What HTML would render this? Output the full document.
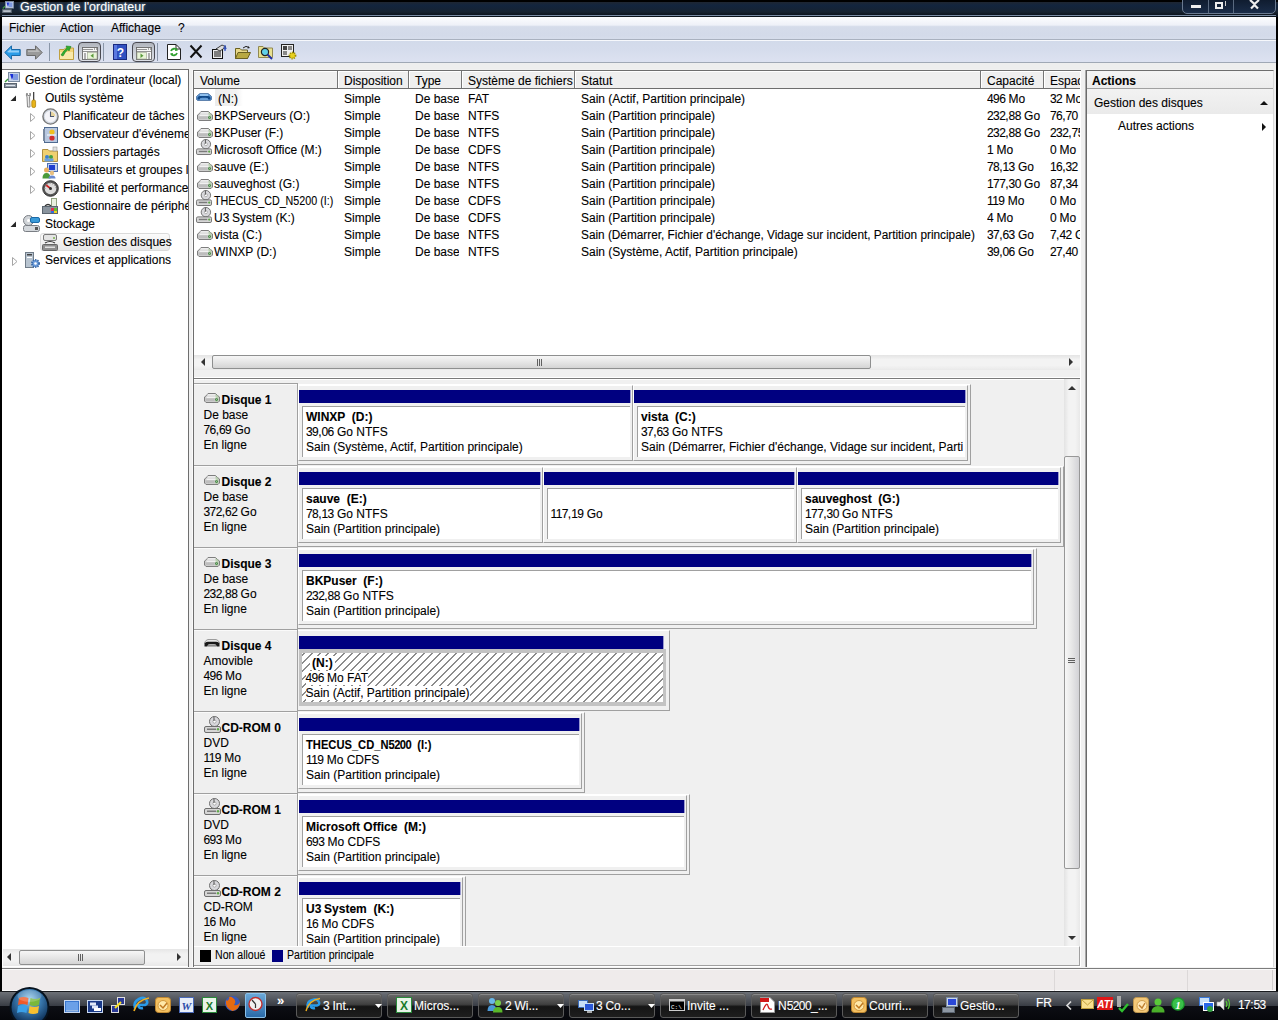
<!DOCTYPE html><html><head><meta charset="utf-8"><style>
*{margin:0;padding:0;box-sizing:border-box}
html,body{width:1278px;height:1020px;overflow:hidden;background:#000;font-family:"Liberation Sans",sans-serif;font-size:12px;color:#000}
.t{-webkit-text-stroke:0.1px currentColor}
.ab{position:absolute}
.t{position:absolute;white-space:pre;line-height:14px}
.ic{position:absolute;overflow:visible}
.clip{position:absolute;overflow:hidden}
.d{letter-spacing:-0.6px}
</style></head><body>
<div class="ab" style="left:2px;top:17px;width:1274px;height:974px;background:#f0f0f0"></div>
<div class="ab" style="left:0px;top:0px;width:1278px;height:17px;background:linear-gradient(#000 0,#000 9%,#1e2632 13%,#13253e 30%,#14243a 45%,#172330 70%,#0e1620 86%)"></div>
<div class="ab" style="left:2px;top:15px;width:1274px;height:1px;background:#7a8ca4"></div>
<div class="ab" style="left:2px;top:16px;width:1274px;height:1px;background:#0a121a"></div>
<svg class="ic" style="left:2px;top:1px;" width="12" height="12" viewBox="0 0 16 16"><rect x="4.5" y="0.5" width="11" height="9" fill="#c8d4e8" stroke="#7a8aa0"/><path d="M6 2 L10 2 L8 8 Z" fill="#1a2fd8"/><rect x="9" y="2" width="5" height="6" fill="#7f9ae0"/><rect x="0.5" y="11.5" width="12" height="4" fill="#8e98a4" stroke="#5a6470"/><rect x="2" y="13" width="9" height="1" fill="#e0e6ee"/><path d="M1 10 L4 7" stroke="#3a9a3a" stroke-width="1.5"/></svg>
<div class="t" style="left:20px;top:-1px;color:#fff;font-size:12.5px;line-height:16px;text-shadow:0 0 3px #8ab">Gestion de l'ordinateur</div>
<div class="ab" style="left:1182px;top:-3px;width:94px;height:17px;border:1px solid #6a7a90;border-radius:0 0 5px 5px;background:linear-gradient(#0e1a2c,#1a2c48)"></div>
<div class="ab" style="left:1208px;top:0px;width:1px;height:13px;background:#5a6a80"></div>
<div class="ab" style="left:1233px;top:0px;width:1px;height:13px;background:#5a6a80"></div>
<div class="ab" style="left:1191px;top:5px;width:10px;height:3px;background:#eee"></div>
<div class="ab" style="left:1215px;top:2px;width:8px;height:7px;border:2px solid #eee"></div>
<div class="ab" style="left:1225px;top:1px;width:1px;height:5px;background:#ccc"></div>
<svg class="ic" style="left:1249px;top:0px;" width="11" height="9" viewBox="0 0 11 9"><path d="M1 0 L5.5 4 L10 0 M2 8.5 L5.5 5 L9 8.5" stroke="#eee" stroke-width="2.2" fill="none"/></svg>
<div class="ab" style="left:2px;top:17px;width:1274px;height:23px;background:linear-gradient(#fcfdfe,#eef1f8 35%,#d5dcea 42%,#d3dae9 80%,#d7deec)"></div>
<div class="ab" style="left:2px;top:39px;width:1274px;height:1px;background:#a9b1bf"></div>
<div class="t" style="left:9px;top:21px;">Fichier</div>
<div class="t" style="left:60px;top:21px;">Action</div>
<div class="t" style="left:111px;top:21px;">Affichage</div>
<div class="t" style="left:178px;top:21px;">?</div>
<div class="ab" style="left:2px;top:40px;width:1274px;height:23px;background:linear-gradient(#d2daea,#d5dcec 40%,#dde2f1)"></div>
<div class="ab" style="left:2px;top:40px;width:1274px;height:1px;background:#f6f8fc"></div>
<div class="ab" style="left:2px;top:62px;width:1274px;height:1px;background:#a0a8b5"></div>
<div class="ab" style="left:2px;top:63px;width:1274px;height:6px;background:#eeeeee"></div>
<svg class="ic" style="left:4px;top:45px;" width="17" height="15" viewBox="0 0 17 15"><path d="M0.8 7.5 L7.5 0.8 V4.5 H16.2 V10.5 H7.5 V14.2 Z" fill="#2a9ce8" stroke="#1a6aa8" stroke-linejoin="round"/><path d="M3 7 L7 3.5 V5.5 H15 V7.5 H5Z" fill="#bfe6ff" opacity="0.7"/></svg>
<svg class="ic" style="left:26px;top:45px;" width="17" height="15" viewBox="0 0 17 15"><path d="M16.2 7.5 L9.5 0.8 V4.5 H0.8 V10.5 H9.5 V14.2 Z" fill="#9a9a9a" stroke="#6a6a6a" stroke-linejoin="round"/><path d="M2 5.5 H10 V3 L14 7 H2Z" fill="#d0d0d0" opacity="0.6"/></svg>
<div class="ab" style="left:49px;top:43px;width:1px;height:18px;background:#8a96a8"></div>
<svg class="ic" style="left:59px;top:45px;" width="15" height="15" viewBox="0 0 15 15"><path d="M0.5 4.5 H5 L6.5 3 H14.5 V14.5 H0.5Z" fill="#f4d478" stroke="#c0a040"/><rect x="1" y="7" width="13" height="7" fill="#fae8a8"/><path d="M2 10 Q5 5 8 3 L7 1 L12 1.5 L10 6 L9 4.5 Q6 7 4 11Z" fill="#30b030" stroke="#208020" stroke-width="0.6"/></svg>
<div class="ab" style="left:78px;top:42px;width:23px;height:20px;border:1.5px solid #4a4a52;border-radius:4px;background:linear-gradient(#b0b4bc,#c8ccd4 40%,#dde0e7)"></div>
<svg class="ic" style="left:82px;top:47px;" width="16" height="13" viewBox="0 0 16 13"><rect x="0.5" y="0.5" width="15" height="12" fill="#f8f8f8" stroke="#6a6a6a" stroke-width="0.9"/><path d="M1 2.5 H11 M1 4.5 H15" stroke="#7a7a7a" stroke-width="0.8"/><rect x="12" y="1.5" width="1" height="1" fill="#555"/><rect x="14" y="1.5" width="1" height="1" fill="#555"/><rect x="5.5" y="5.5" width="9.5" height="6.5" fill="#e8f4d8" stroke="#9aa08a" stroke-width="0.6"/><path d="M11.5 6.5 L8.5 8.8 L11.5 11Z" fill="#5a9a3a"/><path d="M2 7 H4 M2 9 H4 M2 11 H4" stroke="#555" stroke-width="0.9"/></svg>
<div class="ab" style="left:103px;top:43px;width:1px;height:18px;background:#8a96a8"></div>
<svg class="ic" style="left:113px;top:44px;" width="14" height="16" viewBox="0 0 14 16"><rect x="0.5" y="0.5" width="13" height="15" fill="#3050c0" stroke="#1a2a80"/><rect x="1" y="1" width="3" height="14" fill="#5a78e0"/><text x="7.5" y="12.5" font-family="Liberation Sans" font-size="12" font-weight="bold" fill="#fff" text-anchor="middle">?</text></svg>
<div class="ab" style="left:132px;top:42px;width:23px;height:20px;border:1.5px solid #4a4a52;border-radius:4px;background:linear-gradient(#b0b4bc,#c8ccd4 40%,#dde0e7)"></div>
<svg class="ic" style="left:136px;top:47px;" width="16" height="13" viewBox="0 0 16 13"><rect x="0.5" y="0.5" width="15" height="12" fill="#f8f8f8" stroke="#6a6a6a" stroke-width="0.9"/><path d="M1 2.5 H11 M1 4.5 H15" stroke="#7a7a7a" stroke-width="0.8"/><rect x="12" y="1.5" width="1" height="1" fill="#555"/><rect x="14" y="1.5" width="1" height="1" fill="#555"/><rect x="1" y="5.5" width="9.5" height="6.5" fill="#e8f4d8" stroke="#9aa08a" stroke-width="0.6"/><path d="M4.5 6.5 L7.5 8.8 L4.5 11Z" fill="#5a9a3a"/><path d="M12 7 H14 M12 9 H14 M12 11 H14" stroke="#555" stroke-width="0.9"/></svg>
<div class="ab" style="left:157px;top:43px;width:1px;height:18px;background:#8a96a8"></div>
<svg class="ic" style="left:167px;top:44px;" width="14" height="16" viewBox="0 0 14 16"><path d="M0.5 0.5 H9 L13.5 5 V15.5 H0.5Z" fill="#fff" stroke="#222"/><path d="M9 0.5 V5 H13.5" fill="none" stroke="#222"/><path d="M4 7 A3.5 3.5 0 0 1 10 6" fill="none" stroke="#30a030" stroke-width="1.8"/><path d="M10 9 A3.5 3.5 0 0 1 4 10" fill="none" stroke="#30a030" stroke-width="1.8"/><path d="M8.5 4 L11 6.5 L8 7Z" fill="#30a030"/><path d="M5.5 12 L3 9.5 L6 9Z" fill="#30a030"/></svg>
<svg class="ic" style="left:189px;top:44px;" width="14" height="15" viewBox="0 0 14 15"><path d="M1.5 1.5 L12.5 13.5 M12.5 1.5 L1.5 13.5" stroke="#111" stroke-width="2"/></svg>
<svg class="ic" style="left:212px;top:44px;" width="16" height="15" viewBox="0 0 16 15"><rect x="0.5" y="5.5" width="10" height="9" fill="#eee" stroke="#111"/><path d="M2 8 H9 M2 10 H9 M2 12 H9" stroke="#111" stroke-width="1"/><path d="M4 5 L10 1 L14 3 L8 7Z" fill="#ddd" stroke="#111" stroke-width="0.8"/><path d="M13 1 V7" stroke="#3050c0" stroke-width="1.2"/><path d="M11 3 L15 4 L13 6Z" fill="#3050c0"/></svg>
<svg class="ic" style="left:235px;top:45px;" width="16" height="14" viewBox="0 0 16 14"><path d="M0.5 3.5 H5 L6.5 5 H12.5 V13.5 H0.5Z" fill="#e8d888" stroke="#6a6020"/><path d="M0.5 13.5 L3 7.5 H15.5 L12.5 13.5Z" fill="#b8a840" stroke="#6a6020"/><path d="M8 3 Q11 0 14 2.5" fill="none" stroke="#222" stroke-width="1"/><path d="M13 1 L15 3 L12.5 3.5Z" fill="#222"/></svg>
<svg class="ic" style="left:258px;top:44px;" width="16" height="16" viewBox="0 0 16 16"><path d="M0.5 2.5 H5 L6.5 4 H14.5 V13.5 H0.5Z" fill="#e8e090" stroke="#908850"/><circle cx="7" cy="8" r="3.6" fill="#60d0e8" stroke="#222" stroke-width="1.2"/><path d="M9.5 10.5 L14 15" stroke="#2030a0" stroke-width="2"/></svg>
<svg class="ic" style="left:281px;top:44px;" width="16" height="16" viewBox="0 0 16 16"><rect x="0.5" y="0.5" width="12" height="12" fill="#eee" stroke="#222"/><rect x="2" y="2" width="4" height="4" fill="#444"/><rect x="7" y="2" width="4" height="4" fill="#888"/><rect x="2" y="7" width="4" height="4" fill="#888"/><circle cx="11.5" cy="11.5" r="3" fill="#e8d020" stroke="#a09000" stroke-width="1.8" stroke-dasharray="1.2 1"/></svg>
<div class="ab" style="left:2px;top:69px;width:187px;height:899px;background:#fff;border-right:1px solid #6e6e6e;border-top:1px solid #6e6e6e;border-bottom:1px solid #6e6e6e"></div>
<div class="clip" style="left:2px;top:70px;width:186px;height:879px">
<svg class="ic" style="left:2px;top:2px;" width="16" height="16" viewBox="0 0 16 16"><rect x="4.5" y="0.5" width="11" height="9" fill="#c8d4e8" stroke="#7a8aa0"/><path d="M6 2 L10 2 L8 8 Z" fill="#1a2fd8"/><rect x="9" y="2" width="5" height="6" fill="#7f9ae0"/><rect x="0.5" y="11.5" width="12" height="4" fill="#8e98a4" stroke="#5a6470"/><rect x="2" y="13" width="9" height="1" fill="#e0e6ee"/><path d="M1 10 L4 7" stroke="#3a9a3a" stroke-width="1.5"/></svg>
<div class="t" style="left:23px;top:2.5px;">Gestion de l'ordinateur (local)</div>
<svg class="ic" style="left:8px;top:25.0px;" width="7" height="7" viewBox="0 0 7 7"><path d="M6 0.5 V6 H0.5 Z" fill="#262626"/></svg>
<svg class="ic" style="left:23px;top:22px;" width="12" height="16" viewBox="0 0 12 16"><path d="M2 1 Q0.5 3 2 5 L2.5 15 H5 L4.5 5 Q6.5 3 5 1 L4.8 3.5 H2.7 Z" fill="#e8e8e8" stroke="#7c7c7c" stroke-width="0.9"/><rect x="8" y="0" width="1.3" height="8" fill="#444"/><rect x="6.8" y="8" width="3.8" height="7.5" rx="1.5" fill="#e8b41a" stroke="#a87a00" stroke-width="0.7"/></svg>
<div class="t" style="left:43px;top:20.5px;">Outils système</div>
<svg class="ic" style="left:28px;top:42.5px;" width="6" height="9" viewBox="0 0 6 9"><path d="M0.5 0.5 L5 4.5 L0.5 8.5 Z" fill="#fff" stroke="#a6a6a6"/></svg>
<svg class="ic" style="left:40px;top:38px;" width="17" height="17" viewBox="0 0 17 17"><circle cx="8.5" cy="8.5" r="7.6" fill="#cfd6df" stroke="#777" stroke-width="1.4"/><circle cx="8.5" cy="8.5" r="5.8" fill="#f4f4f8"/><path d="M8.5 8.5 V3.5 A5 5 0 0 1 13.5 8.5Z" fill="#e8d6a0"/><path d="M8.5 3.5 V8.5 H12" stroke="#4c5870" stroke-width="1.1" fill="none"/></svg>
<div class="t" style="left:61px;top:38.5px;">Planificateur de tâches</div>
<svg class="ic" style="left:28px;top:60.5px;" width="6" height="9" viewBox="0 0 6 9"><path d="M0.5 0.5 L5 4.5 L0.5 8.5 Z" fill="#fff" stroke="#a6a6a6"/></svg>
<svg class="ic" style="left:41px;top:57px;" width="15" height="16" viewBox="0 0 15 16"><rect x="1.5" y="0.5" width="13" height="15" fill="#b8c8e0" stroke="#4e6a90"/><rect x="0" y="2" width="2" height="12" fill="#7a8aa0"/><circle cx="9" cy="5" r="2.6" fill="#f0c020"/><circle cx="9" cy="11" r="2.6" fill="#d03030"/><path d="M4 8 H13" stroke="#fff" stroke-width="1"/></svg>
<div class="t" style="left:61px;top:56.5px;">Observateur d'événements</div>
<svg class="ic" style="left:28px;top:78.5px;" width="6" height="9" viewBox="0 0 6 9"><path d="M0.5 0.5 L5 4.5 L0.5 8.5 Z" fill="#fff" stroke="#a6a6a6"/></svg>
<svg class="ic" style="left:40px;top:76px;" width="16" height="16" viewBox="0 0 16 16"><path d="M0.5 3.5 H6 L7.5 5 H15.5 V15.5 H0.5 Z" fill="#f0d070" stroke="#b09040"/><rect x="11" y="1" width="4" height="4" fill="#e0e0e0" stroke="#999" stroke-width="0.6"/><circle cx="5" cy="11" r="2" fill="#3a80d0"/><circle cx="9" cy="11" r="2" fill="#40a040"/><rect x="2.5" y="12.5" width="9" height="3" fill="#6aa0e0"/></svg>
<div class="t" style="left:61px;top:74.5px;">Dossiers partagés</div>
<svg class="ic" style="left:28px;top:96.5px;" width="6" height="9" viewBox="0 0 6 9"><path d="M0.5 0.5 L5 4.5 L0.5 8.5 Z" fill="#fff" stroke="#a6a6a6"/></svg>
<svg class="ic" style="left:40px;top:93px;" width="16" height="16" viewBox="0 0 16 16"><rect x="5.5" y="0.5" width="10" height="8" fill="#c0d0f0" stroke="#5070b0"/><rect x="7" y="2" width="6" height="5" fill="#2040d0"/><circle cx="4.5" cy="7" r="2.5" fill="#e8b060"/><path d="M0.5 15.5 Q0.5 10 4.5 10 Q8.5 10 8.5 15.5 Z" fill="#4a9a3a"/><circle cx="10" cy="10" r="2.2" fill="#e8c080"/><path d="M6.5 15.5 Q6.5 12.5 10 12.5 Q13.5 12.5 13.5 15.5 Z" fill="#6a8ad0"/></svg>
<div class="t" style="left:61px;top:92.5px;">Utilisateurs et groupes locaux</div>
<svg class="ic" style="left:28px;top:114.5px;" width="6" height="9" viewBox="0 0 6 9"><path d="M0.5 0.5 L5 4.5 L0.5 8.5 Z" fill="#fff" stroke="#a6a6a6"/></svg>
<svg class="ic" style="left:40px;top:110px;" width="17" height="17" viewBox="0 0 17 17"><circle cx="8.5" cy="8.5" r="7.8" fill="#555" stroke="#333"/><circle cx="8.5" cy="8.5" r="5.8" fill="#ddd"/><path d="M8.5 8.5 L4 5" stroke="#d02020" stroke-width="1.6"/><circle cx="8.5" cy="8.5" r="1.5" fill="#333"/><path d="M3 9 A5.5 5.5 0 0 1 14 9" fill="none" stroke="#888" stroke-width="1" stroke-dasharray="1 1.5"/></svg>
<div class="t" style="left:61px;top:110.5px;">Fiabilité et performances</div>
<svg class="ic" style="left:40px;top:128px;" width="16" height="16" viewBox="0 0 16 16"><rect x="9.5" y="0.5" width="5" height="9" fill="#e8f0e0" stroke="#90a080"/><path d="M3 8 Q6 5 9 8" stroke="#333" fill="none" stroke-width="1.3"/><rect x="0.5" y="8.5" width="15" height="7" fill="#8a949e" stroke="#5a646e"/><rect x="9" y="10" width="3" height="3" fill="#e03050"/><rect x="12" y="10" width="3" height="3" fill="#60c030"/><rect x="12" y="13" width="3" height="2" fill="#f0d020"/><rect x="9" y="13" width="3" height="2" fill="#3070e0"/></svg>
<div class="t" style="left:61px;top:128.5px;">Gestionnaire de périphériques</div>
<svg class="ic" style="left:8px;top:151.0px;" width="7" height="7" viewBox="0 0 7 7"><path d="M6 0.5 V6 H0.5 Z" fill="#262626"/></svg>
<svg class="ic" style="left:21px;top:145px;" width="17" height="17" viewBox="0 0 17 17"><circle cx="5.5" cy="5.5" r="5" fill="#d0d4d8" stroke="#7a7e84"/><circle cx="5.5" cy="5.5" r="1.5" fill="#fff"/><rect x="7.5" y="2.5" width="9" height="5" rx="1.5" fill="#3a9ad8" stroke="#1a6aa8"/><rect x="0.5" y="10.5" width="16" height="6" rx="2" fill="#d4d8dc" stroke="#7a7e84"/><rect x="12" y="12" width="3" height="3" fill="#555"/></svg>
<div class="t" style="left:43px;top:146.5px;">Stockage</div>
<div class="ab" style="left:38px;top:163px;width:130px;height:18px;background:linear-gradient(#fbfbfb,#e8e8e8);border:1px solid #dadada;border-radius:3px"></div>
<svg class="ic" style="left:40px;top:164px;" width="16" height="17" viewBox="0 0 16 17"><rect x="1.5" y="0.5" width="13" height="6" rx="1.5" fill="#e4e4e4" stroke="#7a7a7a"/><circle cx="12" cy="4" r="1" fill="#7ab050"/><path d="M3 9 Q8 6 13 9" stroke="#333" fill="none" stroke-width="1.2"/><rect x="0.5" y="10.5" width="15" height="6" rx="1" fill="#8e8e8e" stroke="#666"/><rect x="3" y="12.5" width="10" height="1.5" fill="#e0e0e0"/></svg>
<div class="t" style="left:61px;top:164.5px;">Gestion des disques</div>
<svg class="ic" style="left:10px;top:186.5px;" width="6" height="9" viewBox="0 0 6 9"><path d="M0.5 0.5 L5 4.5 L0.5 8.5 Z" fill="#fff" stroke="#a6a6a6"/></svg>
<svg class="ic" style="left:23px;top:182px;" width="15" height="16" viewBox="0 0 15 16"><rect x="0.5" y="0.5" width="8" height="15" fill="#b8c4d0" stroke="#707c88"/><rect x="2" y="2" width="5" height="1.5" fill="#444"/><rect x="2" y="5" width="5" height="1" fill="#fff"/><circle cx="10.5" cy="11.5" r="3.6" fill="#6a9ad8" stroke="#3a6aa8" stroke-width="1.8" stroke-dasharray="1.3 1"/><circle cx="10.5" cy="11.5" r="1.3" fill="#fff"/></svg>
<div class="t" style="left:43px;top:182.5px;">Services et applications</div>
</div>
<div class="ab" style="left:3px;top:949px;width:185px;height:17px;background:linear-gradient(#e6e6e6,#f2f2f2 30%,#f2f2f2 70%,#e8e8e8)"></div>
<div class="ab" style="left:19px;top:950px;width:126px;height:15px;background:linear-gradient(#f6f6f6,#e6e6e6 50%,#d4d4d4);border:1px solid #8e8f8f;border-radius:2px"></div>
<svg class="ic" style="left:78px;top:954px;" width="7" height="7" viewBox="0 0 7 7"><path d="M0.5 0V7M2.5 0V7M4.5 0V7" stroke="#606060" stroke-width="1"/></svg>
<svg class="ic" style="left:7px;top:953px;" width="4" height="8" viewBox="0 0 4 8"><path d="M4 0 L0 4 L4 8Z" fill="#333"/></svg>
<svg class="ic" style="left:177px;top:953px;" width="4" height="8" viewBox="0 0 4 8"><path d="M0 0 L4 4 L0 8Z" fill="#333"/></svg>
<div class="ab" style="left:193px;top:70px;width:888px;height:897px;background:#fff;border-left:1px solid #6e6e6e;border-top:1px solid #6e6e6e"></div>
<div class="ab" style="left:192px;top:70px;width:1px;height:897px;background:#fafafa"></div>
<div class="ab" style="left:194px;top:71px;width:886px;height:18px;background:#efefef"></div>
<div class="ab" style="left:194px;top:71px;width:886px;height:1px;background:#fff"></div>
<div class="ab" style="left:194px;top:88px;width:886px;height:1px;background:#6e6e6e"></div>
<div class="clip" style="left:194px;top:71px;width:886px;height:17px">
<div class="t" style="left:6px;top:2.5px;">Volume</div>
<div class="t" style="left:150px;top:2.5px;">Disposition</div>
<div class="t" style="left:221px;top:2.5px;">Type</div>
<div class="t" style="left:274px;top:2.5px;">Système de fichiers</div>
<div class="t" style="left:387px;top:2.5px;">Statut</div>
<div class="t" style="left:793px;top:2.5px;">Capacité</div>
<div class="t" style="left:856px;top:2.5px;">Espace libre</div>
</div>
<div class="ab" style="left:337px;top:71px;width:1px;height:17px;background:#767676"></div>
<div class="ab" style="left:338px;top:72px;width:1px;height:16px;background:#fff"></div>
<div class="ab" style="left:408px;top:71px;width:1px;height:17px;background:#767676"></div>
<div class="ab" style="left:409px;top:72px;width:1px;height:16px;background:#fff"></div>
<div class="ab" style="left:461px;top:71px;width:1px;height:17px;background:#767676"></div>
<div class="ab" style="left:462px;top:72px;width:1px;height:16px;background:#fff"></div>
<div class="ab" style="left:574px;top:71px;width:1px;height:17px;background:#767676"></div>
<div class="ab" style="left:575px;top:72px;width:1px;height:16px;background:#fff"></div>
<div class="ab" style="left:980px;top:71px;width:1px;height:17px;background:#767676"></div>
<div class="ab" style="left:981px;top:72px;width:1px;height:16px;background:#fff"></div>
<div class="ab" style="left:1043px;top:71px;width:1px;height:17px;background:#767676"></div>
<div class="ab" style="left:1044px;top:72px;width:1px;height:16px;background:#fff"></div>
<div class="clip" style="left:194px;top:89px;width:886px;height:265px">
<div class="ab" style="left:21px;top:0px;width:28px;height:17px;background:linear-gradient(90deg,#ececec,#f2f2f2 75%,#fff)"></div>
<svg class="ic" style="left:2px;top:3.5999999999999943px;" width="16" height="8" viewBox="0 0 16 8"><path d="M4 0.5 H12 L13.5 1.5 L15.5 3.5 V6.5 L14.5 7.5 H1.5 L0.5 6.5 V3.5 L2.5 1.5 Z" fill="#5d95d0" stroke="#4a70a0" stroke-width="0.8"/><rect x="4" y="1.2" width="8" height="1.6" fill="#9ccaf4"/><path d="M1.5 5.5 Q1.5 3 4 3 H12 Q14.5 3 14.5 5.5 V6.5 H12.5 Q12 4.8 10 4.8 H6 Q4 4.8 3.5 6.5 H1.5Z" fill="#104888"/><rect x="4" y="5.5" width="8" height="1.5" fill="#6aa0d8"/></svg>
<div class="t" style="left:24px;top:2.5999999999999943px;">(N:)</div>
<div class="clip" style="left:150px;top:2.5999999999999943px;width:62px;height:14px"><div class="t" style="left:0;top:0">Simple</div></div>
<div class="clip" style="left:221px;top:2.5999999999999943px;width:44px;height:14px"><div class="t" style="left:0;top:0">De base</div></div>
<div class="clip" style="left:274px;top:2.5999999999999943px;width:104px;height:14px"><div class="t" style="left:0;top:0">FAT</div></div>
<div class="clip" style="left:387px;top:2.5999999999999943px;width:398px;height:14px"><div class="t" style="left:0;top:0">Sain (Actif, Partition principale)</div></div>
<div class="clip" style="left:793px;top:2.5999999999999943px;width:55px;height:14px"><div class="t" style="left:0;top:0"><span class="d">496</span> Mo</div></div>
<div class="clip" style="left:856px;top:2.5999999999999943px;width:30px;height:14px"><div class="t" style="left:0;top:0"><span class="d">32</span> Mo</div></div>
<svg class="ic" style="left:3px;top:21.599999999999994px;" width="16" height="10" viewBox="0 0 16 10"><path d="M4 0.5 H11.5 L13.5 2.5 L15.5 4 V8 L14 9.5 H2 L0.5 8 V4 L2.5 2.5 Z" fill="#cdcdcd" stroke="#7e7e7e"/><rect x="3.5" y="1.3" width="8" height="1.2" fill="#fafafa"/><rect x="2.5" y="3.6" width="10" height="1.2" fill="#fafafa"/><rect x="1.5" y="5.5" width="9" height="2.5" fill="#bdbdbd"/><path d="M11.5 1 L13.5 2.5 L14.5 4 V8 L13 9 H11.5Z" fill="#a8d098" opacity="0.55"/><circle cx="12.5" cy="6.6" r="1.4" fill="#3f7f3f"/><circle cx="12.5" cy="6.6" r="0.6" fill="#9fd09f"/></svg>
<div class="t" style="left:20px;top:19.599999999999994px;">BKPServeurs (O:)</div>
<div class="clip" style="left:150px;top:19.599999999999994px;width:62px;height:14px"><div class="t" style="left:0;top:0">Simple</div></div>
<div class="clip" style="left:221px;top:19.599999999999994px;width:44px;height:14px"><div class="t" style="left:0;top:0">De base</div></div>
<div class="clip" style="left:274px;top:19.599999999999994px;width:104px;height:14px"><div class="t" style="left:0;top:0">NTFS</div></div>
<div class="clip" style="left:387px;top:19.599999999999994px;width:398px;height:14px"><div class="t" style="left:0;top:0">Sain (Partition principale)</div></div>
<div class="clip" style="left:793px;top:19.599999999999994px;width:55px;height:14px"><div class="t" style="left:0;top:0"><span class="d">232</span>,<span class="d">88</span> Go</div></div>
<div class="clip" style="left:856px;top:19.599999999999994px;width:30px;height:14px"><div class="t" style="left:0;top:0"><span class="d">76</span>,<span class="d">70</span> Go</div></div>
<svg class="ic" style="left:3px;top:38.599999999999994px;" width="16" height="10" viewBox="0 0 16 10"><path d="M4 0.5 H11.5 L13.5 2.5 L15.5 4 V8 L14 9.5 H2 L0.5 8 V4 L2.5 2.5 Z" fill="#cdcdcd" stroke="#7e7e7e"/><rect x="3.5" y="1.3" width="8" height="1.2" fill="#fafafa"/><rect x="2.5" y="3.6" width="10" height="1.2" fill="#fafafa"/><rect x="1.5" y="5.5" width="9" height="2.5" fill="#bdbdbd"/><path d="M11.5 1 L13.5 2.5 L14.5 4 V8 L13 9 H11.5Z" fill="#a8d098" opacity="0.55"/><circle cx="12.5" cy="6.6" r="1.4" fill="#3f7f3f"/><circle cx="12.5" cy="6.6" r="0.6" fill="#9fd09f"/></svg>
<div class="t" style="left:20px;top:36.599999999999994px;">BKPuser (F:)</div>
<div class="clip" style="left:150px;top:36.599999999999994px;width:62px;height:14px"><div class="t" style="left:0;top:0">Simple</div></div>
<div class="clip" style="left:221px;top:36.599999999999994px;width:44px;height:14px"><div class="t" style="left:0;top:0">De base</div></div>
<div class="clip" style="left:274px;top:36.599999999999994px;width:104px;height:14px"><div class="t" style="left:0;top:0">NTFS</div></div>
<div class="clip" style="left:387px;top:36.599999999999994px;width:398px;height:14px"><div class="t" style="left:0;top:0">Sain (Partition principale)</div></div>
<div class="clip" style="left:793px;top:36.599999999999994px;width:55px;height:14px"><div class="t" style="left:0;top:0"><span class="d">232</span>,<span class="d">88</span> Go</div></div>
<div class="clip" style="left:856px;top:36.599999999999994px;width:30px;height:14px"><div class="t" style="left:0;top:0"><span class="d">232</span>,<span class="d">75</span> Go</div></div>
<svg class="ic" style="left:2px;top:49.599999999999994px;" width="16" height="16" viewBox="0 0 17 17"><circle cx="10.5" cy="5.5" r="5" fill="#d8d8dc" stroke="#6e6e6e"/><circle cx="10.5" cy="5.5" r="1.6" fill="#fff" stroke="#888" stroke-width="0.6"/><path d="M10 0.5 V5" stroke="#555" stroke-width="1"/><path d="M2 10.5 H15 Q16.5 10.5 16.5 12 V15 Q16.5 16.5 15 16.5 H2 Q0.5 16.5 0.5 15 V12 Q0.5 10.5 2 10.5Z" fill="#d6d6d6" stroke="#6e6e6e"/><rect x="3" y="12.5" width="9" height="1.5" fill="#7a7a7a"/><circle cx="14" cy="13.3" r="1.2" fill="#5fa84a"/></svg>
<div class="t" style="left:20px;top:53.599999999999994px;">Microsoft Office (M:)</div>
<div class="clip" style="left:150px;top:53.599999999999994px;width:62px;height:14px"><div class="t" style="left:0;top:0">Simple</div></div>
<div class="clip" style="left:221px;top:53.599999999999994px;width:44px;height:14px"><div class="t" style="left:0;top:0">De base</div></div>
<div class="clip" style="left:274px;top:53.599999999999994px;width:104px;height:14px"><div class="t" style="left:0;top:0">CDFS</div></div>
<div class="clip" style="left:387px;top:53.599999999999994px;width:398px;height:14px"><div class="t" style="left:0;top:0">Sain (Partition principale)</div></div>
<div class="clip" style="left:793px;top:53.599999999999994px;width:55px;height:14px"><div class="t" style="left:0;top:0"><span class="d">1</span> Mo</div></div>
<div class="clip" style="left:856px;top:53.599999999999994px;width:30px;height:14px"><div class="t" style="left:0;top:0"><span class="d">0</span> Mo</div></div>
<svg class="ic" style="left:3px;top:72.6px;" width="16" height="10" viewBox="0 0 16 10"><path d="M4 0.5 H11.5 L13.5 2.5 L15.5 4 V8 L14 9.5 H2 L0.5 8 V4 L2.5 2.5 Z" fill="#cdcdcd" stroke="#7e7e7e"/><rect x="3.5" y="1.3" width="8" height="1.2" fill="#fafafa"/><rect x="2.5" y="3.6" width="10" height="1.2" fill="#fafafa"/><rect x="1.5" y="5.5" width="9" height="2.5" fill="#bdbdbd"/><path d="M11.5 1 L13.5 2.5 L14.5 4 V8 L13 9 H11.5Z" fill="#a8d098" opacity="0.55"/><circle cx="12.5" cy="6.6" r="1.4" fill="#3f7f3f"/><circle cx="12.5" cy="6.6" r="0.6" fill="#9fd09f"/></svg>
<div class="t" style="left:20px;top:70.6px;">sauve (E:)</div>
<div class="clip" style="left:150px;top:70.6px;width:62px;height:14px"><div class="t" style="left:0;top:0">Simple</div></div>
<div class="clip" style="left:221px;top:70.6px;width:44px;height:14px"><div class="t" style="left:0;top:0">De base</div></div>
<div class="clip" style="left:274px;top:70.6px;width:104px;height:14px"><div class="t" style="left:0;top:0">NTFS</div></div>
<div class="clip" style="left:387px;top:70.6px;width:398px;height:14px"><div class="t" style="left:0;top:0">Sain (Partition principale)</div></div>
<div class="clip" style="left:793px;top:70.6px;width:55px;height:14px"><div class="t" style="left:0;top:0"><span class="d">78</span>,<span class="d">13</span> Go</div></div>
<div class="clip" style="left:856px;top:70.6px;width:30px;height:14px"><div class="t" style="left:0;top:0"><span class="d">16</span>,<span class="d">32</span> Go</div></div>
<svg class="ic" style="left:3px;top:89.6px;" width="16" height="10" viewBox="0 0 16 10"><path d="M4 0.5 H11.5 L13.5 2.5 L15.5 4 V8 L14 9.5 H2 L0.5 8 V4 L2.5 2.5 Z" fill="#cdcdcd" stroke="#7e7e7e"/><rect x="3.5" y="1.3" width="8" height="1.2" fill="#fafafa"/><rect x="2.5" y="3.6" width="10" height="1.2" fill="#fafafa"/><rect x="1.5" y="5.5" width="9" height="2.5" fill="#bdbdbd"/><path d="M11.5 1 L13.5 2.5 L14.5 4 V8 L13 9 H11.5Z" fill="#a8d098" opacity="0.55"/><circle cx="12.5" cy="6.6" r="1.4" fill="#3f7f3f"/><circle cx="12.5" cy="6.6" r="0.6" fill="#9fd09f"/></svg>
<div class="t" style="left:20px;top:87.6px;">sauveghost (G:)</div>
<div class="clip" style="left:150px;top:87.6px;width:62px;height:14px"><div class="t" style="left:0;top:0">Simple</div></div>
<div class="clip" style="left:221px;top:87.6px;width:44px;height:14px"><div class="t" style="left:0;top:0">De base</div></div>
<div class="clip" style="left:274px;top:87.6px;width:104px;height:14px"><div class="t" style="left:0;top:0">NTFS</div></div>
<div class="clip" style="left:387px;top:87.6px;width:398px;height:14px"><div class="t" style="left:0;top:0">Sain (Partition principale)</div></div>
<div class="clip" style="left:793px;top:87.6px;width:55px;height:14px"><div class="t" style="left:0;top:0"><span class="d">177</span>,<span class="d">30</span> Go</div></div>
<div class="clip" style="left:856px;top:87.6px;width:30px;height:14px"><div class="t" style="left:0;top:0"><span class="d">87</span>,<span class="d">34</span> Go</div></div>
<svg class="ic" style="left:2px;top:100.6px;" width="16" height="16" viewBox="0 0 17 17"><circle cx="10.5" cy="5.5" r="5" fill="#d8d8dc" stroke="#6e6e6e"/><circle cx="10.5" cy="5.5" r="1.6" fill="#fff" stroke="#888" stroke-width="0.6"/><path d="M10 0.5 V5" stroke="#555" stroke-width="1"/><path d="M2 10.5 H15 Q16.5 10.5 16.5 12 V15 Q16.5 16.5 15 16.5 H2 Q0.5 16.5 0.5 15 V12 Q0.5 10.5 2 10.5Z" fill="#d6d6d6" stroke="#6e6e6e"/><rect x="3" y="12.5" width="9" height="1.5" fill="#7a7a7a"/><circle cx="14" cy="13.3" r="1.2" fill="#5fa84a"/></svg>
<div class="t" style="left:20px;top:104.6px;transform:scaleX(0.895);transform-origin:0 0">THECUS_CD_N5200 (I:)</div>
<div class="clip" style="left:150px;top:104.6px;width:62px;height:14px"><div class="t" style="left:0;top:0">Simple</div></div>
<div class="clip" style="left:221px;top:104.6px;width:44px;height:14px"><div class="t" style="left:0;top:0">De base</div></div>
<div class="clip" style="left:274px;top:104.6px;width:104px;height:14px"><div class="t" style="left:0;top:0">CDFS</div></div>
<div class="clip" style="left:387px;top:104.6px;width:398px;height:14px"><div class="t" style="left:0;top:0">Sain (Partition principale)</div></div>
<div class="clip" style="left:793px;top:104.6px;width:55px;height:14px"><div class="t" style="left:0;top:0"><span class="d">119</span> Mo</div></div>
<div class="clip" style="left:856px;top:104.6px;width:30px;height:14px"><div class="t" style="left:0;top:0"><span class="d">0</span> Mo</div></div>
<svg class="ic" style="left:2px;top:117.6px;" width="16" height="16" viewBox="0 0 17 17"><circle cx="10.5" cy="5.5" r="5" fill="#d8d8dc" stroke="#6e6e6e"/><circle cx="10.5" cy="5.5" r="1.6" fill="#fff" stroke="#888" stroke-width="0.6"/><path d="M10 0.5 V5" stroke="#555" stroke-width="1"/><path d="M2 10.5 H15 Q16.5 10.5 16.5 12 V15 Q16.5 16.5 15 16.5 H2 Q0.5 16.5 0.5 15 V12 Q0.5 10.5 2 10.5Z" fill="#d6d6d6" stroke="#6e6e6e"/><rect x="3" y="12.5" width="9" height="1.5" fill="#7a7a7a"/><circle cx="14" cy="13.3" r="1.2" fill="#5fa84a"/></svg>
<div class="t" style="left:20px;top:121.6px;">U<span class="d">3</span> System (K:)</div>
<div class="clip" style="left:150px;top:121.6px;width:62px;height:14px"><div class="t" style="left:0;top:0">Simple</div></div>
<div class="clip" style="left:221px;top:121.6px;width:44px;height:14px"><div class="t" style="left:0;top:0">De base</div></div>
<div class="clip" style="left:274px;top:121.6px;width:104px;height:14px"><div class="t" style="left:0;top:0">CDFS</div></div>
<div class="clip" style="left:387px;top:121.6px;width:398px;height:14px"><div class="t" style="left:0;top:0">Sain (Partition principale)</div></div>
<div class="clip" style="left:793px;top:121.6px;width:55px;height:14px"><div class="t" style="left:0;top:0"><span class="d">4</span> Mo</div></div>
<div class="clip" style="left:856px;top:121.6px;width:30px;height:14px"><div class="t" style="left:0;top:0"><span class="d">0</span> Mo</div></div>
<svg class="ic" style="left:3px;top:140.6px;" width="16" height="10" viewBox="0 0 16 10"><path d="M4 0.5 H11.5 L13.5 2.5 L15.5 4 V8 L14 9.5 H2 L0.5 8 V4 L2.5 2.5 Z" fill="#cdcdcd" stroke="#7e7e7e"/><rect x="3.5" y="1.3" width="8" height="1.2" fill="#fafafa"/><rect x="2.5" y="3.6" width="10" height="1.2" fill="#fafafa"/><rect x="1.5" y="5.5" width="9" height="2.5" fill="#bdbdbd"/><path d="M11.5 1 L13.5 2.5 L14.5 4 V8 L13 9 H11.5Z" fill="#a8d098" opacity="0.55"/><circle cx="12.5" cy="6.6" r="1.4" fill="#3f7f3f"/><circle cx="12.5" cy="6.6" r="0.6" fill="#9fd09f"/></svg>
<div class="t" style="left:20px;top:138.6px;">vista (C:)</div>
<div class="clip" style="left:150px;top:138.6px;width:62px;height:14px"><div class="t" style="left:0;top:0">Simple</div></div>
<div class="clip" style="left:221px;top:138.6px;width:44px;height:14px"><div class="t" style="left:0;top:0">De base</div></div>
<div class="clip" style="left:274px;top:138.6px;width:104px;height:14px"><div class="t" style="left:0;top:0">NTFS</div></div>
<div class="clip" style="left:387px;top:138.6px;width:398px;height:14px"><div class="t" style="left:0;top:0;transform:scaleX(0.984);transform-origin:0 0">Sain (Démarrer, Fichier d'échange, Vidage sur incident, Partition principale)</div></div>
<div class="clip" style="left:793px;top:138.6px;width:55px;height:14px"><div class="t" style="left:0;top:0"><span class="d">37</span>,<span class="d">63</span> Go</div></div>
<div class="clip" style="left:856px;top:138.6px;width:30px;height:14px"><div class="t" style="left:0;top:0"><span class="d">7</span>,<span class="d">42</span> Go</div></div>
<svg class="ic" style="left:3px;top:157.6px;" width="16" height="10" viewBox="0 0 16 10"><path d="M4 0.5 H11.5 L13.5 2.5 L15.5 4 V8 L14 9.5 H2 L0.5 8 V4 L2.5 2.5 Z" fill="#cdcdcd" stroke="#7e7e7e"/><rect x="3.5" y="1.3" width="8" height="1.2" fill="#fafafa"/><rect x="2.5" y="3.6" width="10" height="1.2" fill="#fafafa"/><rect x="1.5" y="5.5" width="9" height="2.5" fill="#bdbdbd"/><path d="M11.5 1 L13.5 2.5 L14.5 4 V8 L13 9 H11.5Z" fill="#a8d098" opacity="0.55"/><circle cx="12.5" cy="6.6" r="1.4" fill="#3f7f3f"/><circle cx="12.5" cy="6.6" r="0.6" fill="#9fd09f"/></svg>
<div class="t" style="left:20px;top:155.6px;">WINXP (D:)</div>
<div class="clip" style="left:150px;top:155.6px;width:62px;height:14px"><div class="t" style="left:0;top:0">Simple</div></div>
<div class="clip" style="left:221px;top:155.6px;width:44px;height:14px"><div class="t" style="left:0;top:0">De base</div></div>
<div class="clip" style="left:274px;top:155.6px;width:104px;height:14px"><div class="t" style="left:0;top:0">NTFS</div></div>
<div class="clip" style="left:387px;top:155.6px;width:398px;height:14px"><div class="t" style="left:0;top:0">Sain (Système, Actif, Partition principale)</div></div>
<div class="clip" style="left:793px;top:155.6px;width:55px;height:14px"><div class="t" style="left:0;top:0"><span class="d">39</span>,<span class="d">06</span> Go</div></div>
<div class="clip" style="left:856px;top:155.6px;width:30px;height:14px"><div class="t" style="left:0;top:0"><span class="d">27</span>,<span class="d">40</span> Go</div></div>
</div>
<div class="ab" style="left:194px;top:355px;width:886px;height:15px;background:linear-gradient(#e4e4e4,#f3f3f3 30%,#f3f3f3 70%,#e9e9e9)"></div>
<div class="ab" style="left:212px;top:355px;width:659px;height:14px;background:linear-gradient(#f6f6f6,#e6e6e6 50%,#d4d4d4);border:1px solid #8e8f8f;border-radius:2px"></div>
<svg class="ic" style="left:537px;top:359px;" width="7" height="7" viewBox="0 0 7 7"><path d="M0.5 0V7M2.5 0V7M4.5 0V7" stroke="#606060" stroke-width="1"/></svg>
<svg class="ic" style="left:201px;top:358px;" width="4" height="8" viewBox="0 0 4 8"><path d="M4 0 L0 4 L4 8Z" fill="#333"/></svg>
<svg class="ic" style="left:1069px;top:358px;" width="4" height="8" viewBox="0 0 4 8"><path d="M0 0 L4 4 L0 8Z" fill="#333"/></svg>
<div class="ab" style="left:194px;top:370px;width:886px;height:8px;background:#f0f0f0"></div>
<div class="ab" style="left:194px;top:377px;width:886px;height:1px;background:#fff"></div>
<div class="ab" style="left:194px;top:378px;width:886px;height:1px;background:#7a7a7a"></div>
<div class="clip" style="left:194px;top:379px;width:870px;height:567px;background:#f0f0f0">
<div class="ab" style="left:0px;top:0px;width:870px;height:1px;background:#fff"></div>
<div class="ab" style="left:0px;top:5px;width:103px;height:81px;background:#efefef"></div>
<div class="ab" style="left:0px;top:4px;width:104px;height:1px;background:#a0a0a0"></div>
<div class="ab" style="left:0px;top:5px;width:103px;height:1px;background:#fafafa"></div>
<div class="ab" style="left:103px;top:5px;width:1px;height:81px;background:#a0a0a0"></div>
<svg class="ic" style="left:10px;top:14px;" width="16" height="10" viewBox="0 0 16 10"><path d="M4 0.5 H11.5 L13.5 2.5 L15.5 4 V8 L14 9.5 H2 L0.5 8 V4 L2.5 2.5 Z" fill="#cdcdcd" stroke="#7e7e7e"/><rect x="3.5" y="1.3" width="8" height="1.2" fill="#fafafa"/><rect x="2.5" y="3.6" width="10" height="1.2" fill="#fafafa"/><rect x="1.5" y="5.5" width="9" height="2.5" fill="#bdbdbd"/><path d="M11.5 1 L13.5 2.5 L14.5 4 V8 L13 9 H11.5Z" fill="#a8d098" opacity="0.55"/><circle cx="12.5" cy="6.6" r="1.4" fill="#3f7f3f"/><circle cx="12.5" cy="6.6" r="0.6" fill="#9fd09f"/></svg>
<div class="t" style="left:27.5px;top:13.5px;font-weight:bold">Disque <span class="d">1</span></div>
<div class="t" style="left:9.5px;top:28.5px;">De base</div>
<div class="t" style="left:9.5px;top:43.5px;"><span class="d">76</span>,<span class="d">69</span> Go</div>
<div class="t" style="left:9.5px;top:58.5px;">En ligne</div>
<div class="ab" style="left:104px;top:5px;width:673px;height:81px;background:#f0f0f0;border-right:1px solid #a0a0a0;border-bottom:1px solid #a0a0a0;border-top:1px solid #fff"></div>
<div class="ab" style="left:104px;top:6px;width:335px;height:76px;background:#f0f0f0;border-right:1px solid #a0a0a0;border-bottom:1px solid #a0a0a0;border-left:1px solid #fff;border-top:1px solid #fff"></div>
<div class="ab" style="left:105px;top:11px;width:332px;height:13px;background:#000080;border-right:1px solid #9a9ad0"></div>
<div class="ab" style="left:108px;top:27px;width:328px;height:51px;background:#fff;border-top:1px solid #a0a0a0;border-left:1px solid #a0a0a0"></div>
<div class="clip" style="left:109px;top:28px;width:325px;height:49px">
<div class="t" style="left:3px;top:2.5px;font-weight:bold">WINXP  (D:)</div>
<div class="t" style="left:3px;top:17.5px;"><span class="d">39</span>,<span class="d">06</span> Go NTFS</div>
<div class="t" style="left:3px;top:32.5px;">Sain (Système, Actif, Partition principale)</div>
</div>
<div class="ab" style="left:439px;top:6px;width:335px;height:76px;background:#f0f0f0;border-right:1px solid #a0a0a0;border-bottom:1px solid #a0a0a0;border-left:1px solid #fff;border-top:1px solid #fff"></div>
<div class="ab" style="left:440px;top:11px;width:332px;height:13px;background:#000080;border-right:1px solid #9a9ad0"></div>
<div class="ab" style="left:443px;top:27px;width:328px;height:51px;background:#fff;border-top:1px solid #a0a0a0;border-left:1px solid #a0a0a0"></div>
<div class="clip" style="left:444px;top:28px;width:325px;height:49px">
<div class="t" style="left:3px;top:2.5px;font-weight:bold">vista  (C:)</div>
<div class="t" style="left:3px;top:17.5px;"><span class="d">37</span>,<span class="d">63</span> Go NTFS</div>
<div class="t" style="left:3px;top:32.5px;">Sain (Démarrer, Fichier d'échange, Vidage sur incident, Partition principale)</div>
</div>
<div class="ab" style="left:0px;top:87px;width:103px;height:81px;background:#efefef"></div>
<div class="ab" style="left:0px;top:86px;width:104px;height:1px;background:#a0a0a0"></div>
<div class="ab" style="left:0px;top:87px;width:103px;height:1px;background:#fafafa"></div>
<div class="ab" style="left:103px;top:87px;width:1px;height:81px;background:#a0a0a0"></div>
<svg class="ic" style="left:10px;top:96px;" width="16" height="10" viewBox="0 0 16 10"><path d="M4 0.5 H11.5 L13.5 2.5 L15.5 4 V8 L14 9.5 H2 L0.5 8 V4 L2.5 2.5 Z" fill="#cdcdcd" stroke="#7e7e7e"/><rect x="3.5" y="1.3" width="8" height="1.2" fill="#fafafa"/><rect x="2.5" y="3.6" width="10" height="1.2" fill="#fafafa"/><rect x="1.5" y="5.5" width="9" height="2.5" fill="#bdbdbd"/><path d="M11.5 1 L13.5 2.5 L14.5 4 V8 L13 9 H11.5Z" fill="#a8d098" opacity="0.55"/><circle cx="12.5" cy="6.6" r="1.4" fill="#3f7f3f"/><circle cx="12.5" cy="6.6" r="0.6" fill="#9fd09f"/></svg>
<div class="t" style="left:27.5px;top:95.5px;font-weight:bold">Disque <span class="d">2</span></div>
<div class="t" style="left:9.5px;top:110.5px;">De base</div>
<div class="t" style="left:9.5px;top:125.5px;"><span class="d">372</span>,<span class="d">62</span> Go</div>
<div class="t" style="left:9.5px;top:140.5px;">En ligne</div>
<div class="ab" style="left:104px;top:87px;width:766px;height:81px;background:#f0f0f0;border-right:1px solid #a0a0a0;border-bottom:1px solid #a0a0a0;border-top:1px solid #fff"></div>
<div class="ab" style="left:104px;top:88px;width:245px;height:76px;background:#f0f0f0;border-right:1px solid #a0a0a0;border-bottom:1px solid #a0a0a0;border-left:1px solid #fff;border-top:1px solid #fff"></div>
<div class="ab" style="left:105px;top:93px;width:242px;height:13px;background:#000080;border-right:1px solid #9a9ad0"></div>
<div class="ab" style="left:108px;top:109px;width:238px;height:51px;background:#fff;border-top:1px solid #a0a0a0;border-left:1px solid #a0a0a0"></div>
<div class="clip" style="left:109px;top:110px;width:235px;height:49px">
<div class="t" style="left:3px;top:2.5px;font-weight:bold">sauve  (E:)</div>
<div class="t" style="left:3px;top:17.5px;"><span class="d">78</span>,<span class="d">13</span> Go NTFS</div>
<div class="t" style="left:3px;top:32.5px;">Sain (Partition principale)</div>
</div>
<div class="ab" style="left:349px;top:88px;width:254px;height:76px;background:#f0f0f0;border-right:1px solid #a0a0a0;border-bottom:1px solid #a0a0a0;border-left:1px solid #fff;border-top:1px solid #fff"></div>
<div class="ab" style="left:350px;top:93px;width:251px;height:13px;background:#000080;border-right:1px solid #9a9ad0"></div>
<div class="ab" style="left:353px;top:109px;width:247px;height:51px;background:#fff;border-top:1px solid #a0a0a0;border-left:1px solid #a0a0a0"></div>
<div class="clip" style="left:354px;top:110px;width:244px;height:49px">
<div class="t" style="left:2.5px;top:17.5px;"><span class="d">117</span>,<span class="d">19</span> Go</div>
</div>
<div class="ab" style="left:603px;top:88px;width:264px;height:76px;background:#f0f0f0;border-right:1px solid #a0a0a0;border-bottom:1px solid #a0a0a0;border-left:1px solid #fff;border-top:1px solid #fff"></div>
<div class="ab" style="left:604px;top:93px;width:261px;height:13px;background:#000080;border-right:1px solid #9a9ad0"></div>
<div class="ab" style="left:607px;top:109px;width:257px;height:51px;background:#fff;border-top:1px solid #a0a0a0;border-left:1px solid #a0a0a0"></div>
<div class="clip" style="left:608px;top:110px;width:254px;height:49px">
<div class="t" style="left:3px;top:2.5px;font-weight:bold">sauveghost  (G:)</div>
<div class="t" style="left:3px;top:17.5px;"><span class="d">177</span>,<span class="d">30</span> Go NTFS</div>
<div class="t" style="left:3px;top:32.5px;">Sain (Partition principale)</div>
</div>
<div class="ab" style="left:0px;top:169px;width:103px;height:81px;background:#efefef"></div>
<div class="ab" style="left:0px;top:168px;width:104px;height:1px;background:#a0a0a0"></div>
<div class="ab" style="left:0px;top:169px;width:103px;height:1px;background:#fafafa"></div>
<div class="ab" style="left:103px;top:169px;width:1px;height:81px;background:#a0a0a0"></div>
<svg class="ic" style="left:10px;top:178px;" width="16" height="10" viewBox="0 0 16 10"><path d="M4 0.5 H11.5 L13.5 2.5 L15.5 4 V8 L14 9.5 H2 L0.5 8 V4 L2.5 2.5 Z" fill="#cdcdcd" stroke="#7e7e7e"/><rect x="3.5" y="1.3" width="8" height="1.2" fill="#fafafa"/><rect x="2.5" y="3.6" width="10" height="1.2" fill="#fafafa"/><rect x="1.5" y="5.5" width="9" height="2.5" fill="#bdbdbd"/><path d="M11.5 1 L13.5 2.5 L14.5 4 V8 L13 9 H11.5Z" fill="#a8d098" opacity="0.55"/><circle cx="12.5" cy="6.6" r="1.4" fill="#3f7f3f"/><circle cx="12.5" cy="6.6" r="0.6" fill="#9fd09f"/></svg>
<div class="t" style="left:27.5px;top:177.5px;font-weight:bold">Disque <span class="d">3</span></div>
<div class="t" style="left:9.5px;top:192.5px;">De base</div>
<div class="t" style="left:9.5px;top:207.5px;"><span class="d">232</span>,<span class="d">88</span> Go</div>
<div class="t" style="left:9.5px;top:222.5px;">En ligne</div>
<div class="ab" style="left:104px;top:169px;width:739px;height:81px;background:#f0f0f0;border-right:1px solid #a0a0a0;border-bottom:1px solid #a0a0a0;border-top:1px solid #fff"></div>
<div class="ab" style="left:104px;top:170px;width:736px;height:76px;background:#f0f0f0;border-right:1px solid #a0a0a0;border-bottom:1px solid #a0a0a0;border-left:1px solid #fff;border-top:1px solid #fff"></div>
<div class="ab" style="left:105px;top:175px;width:733px;height:13px;background:#000080;border-right:1px solid #9a9ad0"></div>
<div class="ab" style="left:108px;top:191px;width:729px;height:51px;background:#fff;border-top:1px solid #a0a0a0;border-left:1px solid #a0a0a0"></div>
<div class="clip" style="left:109px;top:192px;width:726px;height:49px">
<div class="t" style="left:3px;top:2.5px;font-weight:bold">BKPuser  (F:)</div>
<div class="t" style="left:3px;top:17.5px;"><span class="d">232</span>,<span class="d">88</span> Go NTFS</div>
<div class="t" style="left:3px;top:32.5px;">Sain (Partition principale)</div>
</div>
<div class="ab" style="left:0px;top:251px;width:103px;height:81px;background:#efefef"></div>
<div class="ab" style="left:0px;top:250px;width:104px;height:1px;background:#a0a0a0"></div>
<div class="ab" style="left:0px;top:251px;width:103px;height:1px;background:#fafafa"></div>
<div class="ab" style="left:103px;top:251px;width:1px;height:81px;background:#a0a0a0"></div>
<svg class="ic" style="left:10px;top:260px;" width="16" height="8" viewBox="0 0 16 8"><path d="M4 0.5 H12 Q14 0.8 15.5 3.5 V5 H0.5 V3.5 Q2 0.8 4 0.5Z" fill="#e8e8e8" stroke="#888" stroke-width="0.8"/><path d="M0.5 6 Q0.5 2.8 4 2.8 H12 Q15.5 2.8 15.5 6 V7.5 H12.5 Q12.5 5 10 5 H6 Q3.5 5 3.5 7.5 H0.5Z" fill="#1a1a1a"/><rect x="4" y="5.6" width="8" height="2" fill="#8a8a8a"/></svg>
<div class="t" style="left:27.5px;top:259.5px;font-weight:bold">Disque <span class="d">4</span></div>
<div class="t" style="left:9.5px;top:274.5px;">Amovible</div>
<div class="t" style="left:9.5px;top:289.5px;"><span class="d">496</span> Mo</div>
<div class="t" style="left:9.5px;top:304.5px;">En ligne</div>
<div class="ab" style="left:104px;top:251px;width:372px;height:81px;background:#f0f0f0;border-right:1px solid #a0a0a0;border-bottom:1px solid #a0a0a0;border-top:1px solid #fff"></div>
<div class="ab" style="left:105px;top:257px;width:365px;height:13px;background:#000080;border-right:1px solid #9a9ad0"></div>
<div class="ab" style="left:105px;top:270px;width:367px;height:57px;background:#c3c3c3"></div>
<div class="ab" style="left:108px;top:274px;width:361px;height:49px;background-color:#fff;background-image:repeating-linear-gradient(-45deg,#fff 0,#fff 4.76px,#8c8c8c 4.76px,#8c8c8c 5.66px)"></div>
<div class="t" style="left:116px;top:276.5px;font-weight:bold;background:#fff;padding:0 2px">(N:)</div>
<div class="t" style="left:111.5px;top:291.5px;background:#fff"><span class="d">496</span> Mo FAT</div>
<div class="t" style="left:111.5px;top:306.5px;background:#fff">Sain (Actif, Partition principale)</div>
<div class="ab" style="left:0px;top:333px;width:103px;height:81px;background:#efefef"></div>
<div class="ab" style="left:0px;top:332px;width:104px;height:1px;background:#a0a0a0"></div>
<div class="ab" style="left:0px;top:333px;width:103px;height:1px;background:#fafafa"></div>
<div class="ab" style="left:103px;top:333px;width:1px;height:81px;background:#a0a0a0"></div>
<svg class="ic" style="left:10px;top:337px;" width="17" height="17" viewBox="0 0 17 17"><circle cx="10.5" cy="5.5" r="5" fill="#d8d8dc" stroke="#6e6e6e"/><circle cx="10.5" cy="5.5" r="1.6" fill="#fff" stroke="#888" stroke-width="0.6"/><path d="M10 0.5 V5" stroke="#555" stroke-width="1"/><path d="M2 10.5 H15 Q16.5 10.5 16.5 12 V15 Q16.5 16.5 15 16.5 H2 Q0.5 16.5 0.5 15 V12 Q0.5 10.5 2 10.5Z" fill="#d6d6d6" stroke="#6e6e6e"/><rect x="3" y="12.5" width="9" height="1.5" fill="#7a7a7a"/><circle cx="14" cy="13.3" r="1.2" fill="#5fa84a"/></svg>
<div class="t" style="left:27.5px;top:341.5px;font-weight:bold">CD-ROM <span class="d">0</span></div>
<div class="t" style="left:9.5px;top:356.5px;">DVD</div>
<div class="t" style="left:9.5px;top:371.5px;"><span class="d">119</span> Mo</div>
<div class="t" style="left:9.5px;top:386.5px;">En ligne</div>
<div class="ab" style="left:104px;top:333px;width:287px;height:81px;background:#f0f0f0;border-right:1px solid #a0a0a0;border-bottom:1px solid #a0a0a0;border-top:1px solid #fff"></div>
<div class="ab" style="left:104px;top:334px;width:284px;height:76px;background:#f0f0f0;border-right:1px solid #a0a0a0;border-bottom:1px solid #a0a0a0;border-left:1px solid #fff;border-top:1px solid #fff"></div>
<div class="ab" style="left:105px;top:339px;width:281px;height:13px;background:#000080;border-right:1px solid #9a9ad0"></div>
<div class="ab" style="left:108px;top:355px;width:277px;height:51px;background:#fff;border-top:1px solid #a0a0a0;border-left:1px solid #a0a0a0"></div>
<div class="clip" style="left:109px;top:356px;width:274px;height:49px">
<div class="t" style="left:3px;top:2.5px;font-weight:bold;transform:scaleX(0.93);transform-origin:0 0">THECUS_CD_N<span class="d">5200</span>  (I:)</div>
<div class="t" style="left:3px;top:17.5px;"><span class="d">119</span> Mo CDFS</div>
<div class="t" style="left:3px;top:32.5px;">Sain (Partition principale)</div>
</div>
<div class="ab" style="left:0px;top:415px;width:103px;height:81px;background:#efefef"></div>
<div class="ab" style="left:0px;top:414px;width:104px;height:1px;background:#a0a0a0"></div>
<div class="ab" style="left:0px;top:415px;width:103px;height:1px;background:#fafafa"></div>
<div class="ab" style="left:103px;top:415px;width:1px;height:81px;background:#a0a0a0"></div>
<svg class="ic" style="left:10px;top:419px;" width="17" height="17" viewBox="0 0 17 17"><circle cx="10.5" cy="5.5" r="5" fill="#d8d8dc" stroke="#6e6e6e"/><circle cx="10.5" cy="5.5" r="1.6" fill="#fff" stroke="#888" stroke-width="0.6"/><path d="M10 0.5 V5" stroke="#555" stroke-width="1"/><path d="M2 10.5 H15 Q16.5 10.5 16.5 12 V15 Q16.5 16.5 15 16.5 H2 Q0.5 16.5 0.5 15 V12 Q0.5 10.5 2 10.5Z" fill="#d6d6d6" stroke="#6e6e6e"/><rect x="3" y="12.5" width="9" height="1.5" fill="#7a7a7a"/><circle cx="14" cy="13.3" r="1.2" fill="#5fa84a"/></svg>
<div class="t" style="left:27.5px;top:423.5px;font-weight:bold">CD-ROM <span class="d">1</span></div>
<div class="t" style="left:9.5px;top:438.5px;">DVD</div>
<div class="t" style="left:9.5px;top:453.5px;"><span class="d">693</span> Mo</div>
<div class="t" style="left:9.5px;top:468.5px;">En ligne</div>
<div class="ab" style="left:104px;top:415px;width:392px;height:81px;background:#f0f0f0;border-right:1px solid #a0a0a0;border-bottom:1px solid #a0a0a0;border-top:1px solid #fff"></div>
<div class="ab" style="left:104px;top:416px;width:389px;height:76px;background:#f0f0f0;border-right:1px solid #a0a0a0;border-bottom:1px solid #a0a0a0;border-left:1px solid #fff;border-top:1px solid #fff"></div>
<div class="ab" style="left:105px;top:421px;width:386px;height:13px;background:#000080;border-right:1px solid #9a9ad0"></div>
<div class="ab" style="left:108px;top:437px;width:382px;height:51px;background:#fff;border-top:1px solid #a0a0a0;border-left:1px solid #a0a0a0"></div>
<div class="clip" style="left:109px;top:438px;width:379px;height:49px">
<div class="t" style="left:3px;top:2.5px;font-weight:bold">Microsoft Office  (M:)</div>
<div class="t" style="left:3px;top:17.5px;"><span class="d">693</span> Mo CDFS</div>
<div class="t" style="left:3px;top:32.5px;">Sain (Partition principale)</div>
</div>
<div class="ab" style="left:0px;top:497px;width:103px;height:81px;background:#efefef"></div>
<div class="ab" style="left:0px;top:496px;width:104px;height:1px;background:#a0a0a0"></div>
<div class="ab" style="left:0px;top:497px;width:103px;height:1px;background:#fafafa"></div>
<div class="ab" style="left:103px;top:497px;width:1px;height:81px;background:#a0a0a0"></div>
<svg class="ic" style="left:10px;top:501px;" width="17" height="17" viewBox="0 0 17 17"><circle cx="10.5" cy="5.5" r="5" fill="#d8d8dc" stroke="#6e6e6e"/><circle cx="10.5" cy="5.5" r="1.6" fill="#fff" stroke="#888" stroke-width="0.6"/><path d="M10 0.5 V5" stroke="#555" stroke-width="1"/><path d="M2 10.5 H15 Q16.5 10.5 16.5 12 V15 Q16.5 16.5 15 16.5 H2 Q0.5 16.5 0.5 15 V12 Q0.5 10.5 2 10.5Z" fill="#d6d6d6" stroke="#6e6e6e"/><rect x="3" y="12.5" width="9" height="1.5" fill="#7a7a7a"/><circle cx="14" cy="13.3" r="1.2" fill="#5fa84a"/></svg>
<div class="t" style="left:27.5px;top:505.5px;font-weight:bold">CD-ROM <span class="d">2</span></div>
<div class="t" style="left:9.5px;top:520.5px;">CD-ROM</div>
<div class="t" style="left:9.5px;top:535.5px;"><span class="d">16</span> Mo</div>
<div class="t" style="left:9.5px;top:550.5px;">En ligne</div>
<div class="ab" style="left:104px;top:497px;width:168px;height:81px;background:#f0f0f0;border-right:1px solid #a0a0a0;border-bottom:1px solid #a0a0a0;border-top:1px solid #fff"></div>
<div class="ab" style="left:104px;top:498px;width:165px;height:76px;background:#f0f0f0;border-right:1px solid #a0a0a0;border-bottom:1px solid #a0a0a0;border-left:1px solid #fff;border-top:1px solid #fff"></div>
<div class="ab" style="left:105px;top:503px;width:162px;height:13px;background:#000080;border-right:1px solid #9a9ad0"></div>
<div class="ab" style="left:108px;top:519px;width:158px;height:51px;background:#fff;border-top:1px solid #a0a0a0;border-left:1px solid #a0a0a0"></div>
<div class="clip" style="left:109px;top:520px;width:155px;height:49px">
<div class="t" style="left:3px;top:2.5px;font-weight:bold">U<span class="d">3</span> System  (K:)</div>
<div class="t" style="left:3px;top:17.5px;"><span class="d">16</span> Mo CDFS</div>
<div class="t" style="left:3px;top:32.5px;">Sain (Partition principale)</div>
</div>
</div>
<div class="ab" style="left:1064px;top:379px;width:16px;height:567px;background:linear-gradient(90deg,#e3e3e3,#f3f3f3 30%,#f3f3f3 70%,#e8e8e8)"></div>
<div class="ab" style="left:1064px;top:456px;width:16px;height:413px;background:linear-gradient(90deg,#f7f7f7,#e8e8e8 45%,#d2d2d6);border:1px solid #979797;border-radius:2px"></div>
<svg class="ic" style="left:1068px;top:658px;" width="7" height="7" viewBox="0 0 7 7"><path d="M0 0.5H7M0 2.5H7M0 4.5H7" stroke="#606060" stroke-width="1"/></svg>
<svg class="ic" style="left:1068px;top:386px;" width="8" height="4" viewBox="0 0 8 4"><path d="M0 4 L4 0 L8 4Z" fill="#333"/></svg>
<svg class="ic" style="left:1068px;top:936px;" width="8" height="4" viewBox="0 0 8 4"><path d="M0 0 L4 4 L8 0Z" fill="#333"/></svg>
<div class="ab" style="left:194px;top:946px;width:886px;height:20px;background:#f0f0f0;border-top:1px solid #fff;border-bottom:1px solid #a0a0a0;border-right:1px solid #a0a0a0"></div>
<div class="ab" style="left:200px;top:950px;width:11px;height:12px;background:#000"></div>
<div class="t" style="left:215px;top:948px;transform:scaleX(0.88);transform-origin:0 0">Non alloué</div>
<div class="ab" style="left:272px;top:950px;width:11px;height:12px;background:#000080"></div>
<div class="t" style="left:287px;top:948px;transform:scaleX(0.88);transform-origin:0 0">Partition principale</div>
<div class="ab" style="left:1086px;top:70px;width:188px;height:897px;background:#fff;border-left:1px solid #6a6a6a;border-top:1px solid #6e6e6e;border-right:1px solid #dadada"></div>
<div class="ab" style="left:1085px;top:70px;width:1px;height:897px;background:#a8a8a8"></div>
<div class="ab" style="left:1087px;top:71px;width:186px;height:17px;background:linear-gradient(#f4f4f4,#ececec)"></div>
<div class="ab" style="left:1087px;top:88px;width:186px;height:1px;background:#a0a0a0"></div>
<div class="t" style="left:1092px;top:73.6px;font-weight:bold">Actions</div>
<div class="ab" style="left:1087px;top:89px;width:186px;height:25px;background:linear-gradient(#f2f2f2,#eaeaea)"></div>
<div class="t" style="left:1094px;top:95.6px;">Gestion des disques</div>
<svg class="ic" style="left:1260px;top:101px;" width="8" height="4" viewBox="0 0 8 4"><path d="M0 4 L4 0 L8 4Z" fill="#111"/></svg>
<div class="t" style="left:1118px;top:119.30000000000001px;">Autres actions</div>
<svg class="ic" style="left:1262px;top:123px;" width="4" height="8" viewBox="0 0 4 8"><path d="M0 0 L4 4 L0 8Z" fill="#111"/></svg>
<div class="ab" style="left:2px;top:967px;width:1274px;height:1px;background:#f4f4f4"></div>
<div class="ab" style="left:2px;top:968px;width:1274px;height:1px;background:#7c7c7c"></div>
<div class="ab" style="left:2px;top:969px;width:1274px;height:1px;background:#fafafa"></div>
<div class="ab" style="left:2px;top:970px;width:1274px;height:20px;background:#efebeb"></div>
<div class="ab" style="left:2px;top:990px;width:1274px;height:1px;background:#fcfcfc"></div>
<div class="ab" style="left:1054px;top:970px;width:1px;height:21px;background:#dcd8d8"></div>
<div class="ab" style="left:1187px;top:970px;width:1px;height:21px;background:#dcd8d8"></div>
<div class="ab" style="left:1272px;top:970px;width:1px;height:20px;background:#d0cccc"></div>
<div class="ab" style="left:0px;top:991px;width:1278px;height:29px;background:linear-gradient(#1a1c20 0,#1a1c20 3.4%,#6c7076 3.5%,#555960 25%,#3a3e46 50%,#0c0e14 52%,#06070b 100%)"></div>
<svg class="ic" style="left:9px;top:987px;" width="42" height="33" viewBox="0 0 42 33"><defs><radialGradient id="orb" cx="0.5" cy="0.3" r="0.7"><stop offset="0" stop-color="#9ad0f0"/><stop offset="0.45" stop-color="#3a7ab0"/><stop offset="1" stop-color="#0a2a50"/></radialGradient></defs><circle cx="20.5" cy="20" r="20" fill="#06121e"/><circle cx="20.5" cy="20" r="18" fill="url(#orb)"/><path d="M10 11 Q14 9 19.5 11 L18.5 18 Q13.5 16 9 18Z" fill="#f05a28"/><path d="M21.5 11 Q26 13 31 11 L30 18 Q25 20 20.5 18Z" fill="#7ab83a"/><path d="M9 19 Q13.5 17 18.5 19 L17.5 26 Q12.5 24 8 26Z" fill="#3aa0e8"/><path d="M20.5 19 Q25 21 30 19 L29 26 Q24 28 19.5 26Z" fill="#f8c030"/><ellipse cx="20.5" cy="9" rx="12" ry="6" fill="#fff" opacity="0.2"/></svg>
<svg class="ic" style="left:64px;top:1000px;" width="16" height="13" viewBox="0 0 16 13"><rect x="0.5" y="0.5" width="15" height="12" fill="#3a78d0" stroke="#c8d8f0"/><rect x="2" y="2" width="12" height="8" fill="#6aa0e8"/><rect x="2" y="10" width="12" height="1.5" fill="#9ab8e0"/></svg>
<svg class="ic" style="left:87px;top:1000px;" width="16" height="13" viewBox="0 0 16 13"><rect x="0.5" y="0.5" width="15" height="12" fill="#1a3a88" stroke="#c8d8f0"/><rect x="3" y="2.5" width="6" height="3" fill="#e0e8f8"/><rect x="5" y="5.5" width="6" height="3" fill="#e0e8f8"/><rect x="7" y="8" width="7" height="3" fill="#fff"/></svg>
<svg class="ic" style="left:111px;top:997px;" width="14" height="16" viewBox="0 0 14 16"><rect x="6.5" y="0.5" width="7" height="7" fill="#2a3a98" stroke="#ddd"/><rect x="0.5" y="8.5" width="7" height="7" fill="#2a3a98" stroke="#ddd"/><path d="M4 11 L10 5" stroke="#f8e020" stroke-width="2"/></svg>
<svg class="ic" style="left:132px;top:996px;" width="18" height="18" viewBox="0 0 18 18"><path d="M3 12 Q1 6 7 3 Q13 0 15 5 Q16 8 13 9 H6 Q7 13 11 12" fill="none" stroke="#2a9ae8" stroke-width="2.6"/><path d="M2 15 Q5 4 17 2" fill="none" stroke="#f0b020" stroke-width="1.6"/></svg>
<svg class="ic" style="left:155px;top:997px;" width="16" height="16" viewBox="0 0 16 16"><rect x="0.5" y="0.5" width="15" height="15" rx="3" fill="#f4c060" stroke="#c08830"/><circle cx="8" cy="8.5" r="5" fill="#ffe8a8" stroke="#d09840"/><path d="M5 8 L8 11 L12 6" fill="none" stroke="#c07820" stroke-width="1.5"/></svg>
<svg class="ic" style="left:179px;top:997px;" width="15" height="16" viewBox="0 0 15 16"><rect x="0.5" y="0.5" width="14" height="15" fill="#e8eef8" stroke="#4a6ab8"/><text x="7.5" y="12.5" font-family="Liberation Serif" font-size="11" font-style="italic" font-weight="bold" fill="#2a4aa8" text-anchor="middle">W</text></svg>
<svg class="ic" style="left:202px;top:997px;" width="15" height="16" viewBox="0 0 15 16"><rect x="0.5" y="0.5" width="14" height="15" fill="#e8f4e8" stroke="#2a8a3a"/><text x="7.5" y="12.5" font-family="Liberation Sans" font-size="11" font-weight="bold" fill="#1a7a2a" text-anchor="middle">X</text></svg>
<svg class="ic" style="left:224px;top:995px;" width="17" height="17" viewBox="0 0 17 17"><circle cx="8.5" cy="8.5" r="7.5" fill="#3a5ab8"/><path d="M2 5 Q1 13 8.5 16 Q16 14 16 7 Q14 11 10 10 Q13 6 9 3 Q7 1 5 2 Q6 4 3 6Z" fill="#e86a10"/></svg>
<div class="ab" style="left:245px;top:993px;width:21px;height:25px;background:linear-gradient(#6aa8d8,#2a6aa8);border:1px solid #8ac0e8;border-radius:2px"></div>
<svg class="ic" style="left:247px;top:996px;" width="17" height="17" viewBox="0 0 17 17"><circle cx="8.5" cy="8" r="6.5" fill="#f0f0f0" stroke="#c03030" stroke-width="1.4"/><path d="M8.5 8 L5 4 M8.5 8 V12" stroke="#333" stroke-width="1.2"/></svg>
<div class="t" style="left:277px;top:994px;color:#fff;font-size:13px;font-weight:bold">»</div>
<div class="ab" style="left:296px;top:993px;width:86px;height:25px;border:1px solid #5a5a5a;border-radius:3px;background:linear-gradient(#6a6a6a,#404040 45%,#151515 55%,#1e1e1e);box-shadow:inset 0 1px 0 #888"></div>
<svg class="ic" style="left:305px;top:997px;" width="16" height="16" viewBox="0 0 16 16"><path d="M3 11 Q1 5 7 3 Q12 1 14 5 Q15 8 12 8.5 H5.5 Q6 12 10 11" fill="none" stroke="#2a9ae8" stroke-width="2.4"/><path d="M1 14 Q4 3 15 1.5" fill="none" stroke="#f0b020" stroke-width="1.4"/></svg>
<div class="t" style="left:323px;top:999px;color:#fff;font-size:12px"><span class="d">3</span> Int...</div>
<svg class="ic" style="left:375px;top:1004px;" width="7" height="4" viewBox="0 0 7 4"><path d="M0 0 H7 L3.5 4Z" fill="#fff"/></svg>
<div class="ab" style="left:387px;top:993px;width:86px;height:25px;border:1px solid #5a5a5a;border-radius:3px;background:linear-gradient(#6a6a6a,#404040 45%,#151515 55%,#1e1e1e);box-shadow:inset 0 1px 0 #888"></div>
<svg class="ic" style="left:396px;top:997px;" width="16" height="16" viewBox="0 0 16 16"><rect x="0.5" y="0.5" width="15" height="15" fill="#e8f4e8" stroke="#2a8a3a"/><text x="8" y="13" font-family="Liberation Sans" font-size="12" font-weight="bold" fill="#1a7a2a" text-anchor="middle">X</text></svg>
<div class="t" style="left:414px;top:999px;color:#fff;font-size:12px">Micros...</div>
<div class="ab" style="left:478px;top:993px;width:86px;height:25px;border:1px solid #5a5a5a;border-radius:3px;background:linear-gradient(#6a6a6a,#404040 45%,#151515 55%,#1e1e1e);box-shadow:inset 0 1px 0 #888"></div>
<svg class="ic" style="left:487px;top:997px;" width="16" height="16" viewBox="0 0 16 16"><circle cx="5" cy="4" r="3" fill="#6ab8e8"/><path d="M0.5 14 Q0.5 8 5 8 Q9.5 8 9.5 14Z" fill="#4a98d8"/><circle cx="11" cy="6" r="3" fill="#7ad04a"/><path d="M6 15.5 Q6 10 11 10 Q15.5 10 15.5 15.5Z" fill="#5ab82a"/></svg>
<div class="t" style="left:505px;top:999px;color:#fff;font-size:12px"><span class="d">2</span> Wi...</div>
<svg class="ic" style="left:557px;top:1004px;" width="7" height="4" viewBox="0 0 7 4"><path d="M0 0 H7 L3.5 4Z" fill="#fff"/></svg>
<div class="ab" style="left:569px;top:993px;width:86px;height:25px;border:1px solid #5a5a5a;border-radius:3px;background:linear-gradient(#6a6a6a,#404040 45%,#151515 55%,#1e1e1e);box-shadow:inset 0 1px 0 #888"></div>
<svg class="ic" style="left:578px;top:997px;" width="17" height="16" viewBox="0 0 17 16"><rect x="0.5" y="3.5" width="9" height="7" fill="#c8e0f8" stroke="#3a6ab8"/><rect x="6.5" y="6.5" width="9" height="7" fill="#2a58d8" stroke="#c8e0f8"/><rect x="9" y="14" width="5" height="2" fill="#aaa"/></svg>
<div class="t" style="left:596px;top:999px;color:#fff;font-size:12px"><span class="d">3</span> Co...</div>
<svg class="ic" style="left:648px;top:1004px;" width="7" height="4" viewBox="0 0 7 4"><path d="M0 0 H7 L3.5 4Z" fill="#fff"/></svg>
<div class="ab" style="left:660px;top:993px;width:86px;height:25px;border:1px solid #5a5a5a;border-radius:3px;background:linear-gradient(#6a6a6a,#404040 45%,#151515 55%,#1e1e1e);box-shadow:inset 0 1px 0 #888"></div>
<svg class="ic" style="left:669px;top:999px;" width="16" height="12" viewBox="0 0 16 12"><rect x="0.5" y="0.5" width="15" height="11" fill="#000" stroke="#ccc"/><rect x="0.5" y="0.5" width="15" height="2" fill="#ccc"/><text x="2" y="10" font-family="Liberation Mono" font-size="6" fill="#fff">C:\</text></svg>
<div class="t" style="left:687px;top:999px;color:#fff;font-size:12px">Invite ...</div>
<div class="ab" style="left:751px;top:993px;width:86px;height:25px;border:1px solid #5a5a5a;border-radius:3px;background:linear-gradient(#6a6a6a,#404040 45%,#151515 55%,#1e1e1e);box-shadow:inset 0 1px 0 #888"></div>
<svg class="ic" style="left:760px;top:997px;" width="15" height="16" viewBox="0 0 15 16"><path d="M0.5 0.5 H10 L14.5 5 V15.5 H0.5Z" fill="#fff" stroke="#999"/><rect x="0" y="1" width="9" height="4" fill="#d01818"/><path d="M3 13 Q7 4 8 9 Q9 13 12 12" fill="none" stroke="#d01818" stroke-width="1.3"/></svg>
<div class="t" style="left:778px;top:999px;color:#fff;font-size:12px">N<span class="d">5200</span>_...</div>
<div class="ab" style="left:842px;top:993px;width:86px;height:25px;border:1px solid #5a5a5a;border-radius:3px;background:linear-gradient(#6a6a6a,#404040 45%,#151515 55%,#1e1e1e);box-shadow:inset 0 1px 0 #888"></div>
<svg class="ic" style="left:851px;top:997px;" width="16" height="16" viewBox="0 0 16 16"><rect x="0.5" y="0.5" width="15" height="15" rx="3" fill="#f4c060" stroke="#c08830"/><circle cx="8" cy="8.5" r="5" fill="#ffe8a8" stroke="#d09840"/><path d="M5 8 L8 11 L12 6" fill="none" stroke="#c07820" stroke-width="1.5"/></svg>
<div class="t" style="left:869px;top:999px;color:#fff;font-size:12px">Courri...</div>
<div class="ab" style="left:933px;top:993px;width:86px;height:25px;border:1px solid #5a5a5a;border-radius:3px;background:linear-gradient(#6a6a6a,#404040 45%,#151515 55%,#1e1e1e);box-shadow:inset 0 1px 0 #888"></div>
<svg class="ic" style="left:942px;top:997px;" width="16" height="16" viewBox="0 0 16 16"><rect x="4.5" y="0.5" width="11" height="9" fill="#c8d4e8" stroke="#7a8aa0"/><rect x="6" y="2" width="8" height="6" fill="#2a48d8"/><rect x="0.5" y="10.5" width="12" height="5" fill="#8e98a4" stroke="#5a6470"/></svg>
<div class="t" style="left:960px;top:999px;color:#fff;font-size:12px">Gestio...</div>
<div class="t" style="left:1036px;top:996px;color:#fff;font-size:12px">FR</div>
<svg class="ic" style="left:1066px;top:1001px;" width="6" height="9" viewBox="0 0 6 9"><path d="M5 0.5 L1 4.5 L5 8.5" fill="none" stroke="#ddd" stroke-width="1.6"/></svg>
<svg class="ic" style="left:1081px;top:999px;" width="13" height="10" viewBox="0 0 13 10"><rect x="0.5" y="0.5" width="12" height="9" fill="#f8e090" stroke="#c0a040"/><path d="M0.5 0.5 L6.5 6 L12.5 0.5" fill="none" stroke="#c0a040"/></svg>
<svg class="ic" style="left:1097px;top:997px;" width="16" height="13" viewBox="0 0 16 13"><rect x="0" y="0" width="16" height="13" fill="#e01818"/><text x="8" y="11" font-family="Liberation Sans" font-size="10" font-weight="bold" font-style="italic" fill="#fff" text-anchor="middle">ATI</text></svg>
<svg class="ic" style="left:1115px;top:996px;" width="14" height="17" viewBox="0 0 14 17"><rect x="2" y="0" width="4" height="11" fill="#aaa"/><path d="M4 12 L7 15 L13 8" fill="none" stroke="#30c030" stroke-width="2.4"/></svg>
<svg class="ic" style="left:1133px;top:997px;" width="16" height="16" viewBox="0 0 16 16"><rect x="0.5" y="0.5" width="15" height="15" rx="3" fill="#f4c878" stroke="#c09850"/><circle cx="9" cy="8.5" r="5" fill="#ffe8b8" stroke="#d0a050"/><path d="M6 8 L9 11 L12 6" fill="none" stroke="#c08030" stroke-width="1.4"/></svg>
<svg class="ic" style="left:1151px;top:997px;" width="14" height="16" viewBox="0 0 14 16"><circle cx="7" cy="5" r="3.5" fill="#5ac83a"/><path d="M0.5 15.5 Q0.5 9 7 9 Q13.5 9 13.5 15.5Z" fill="#4ab02a"/></svg>
<svg class="ic" style="left:1171px;top:997px;" width="14" height="14" viewBox="0 0 14 14"><circle cx="7" cy="7" r="6.8" fill="#1a9a2a"/><circle cx="7" cy="7" r="5.5" fill="#3ac04a"/><text x="7" y="11.5" font-family="Liberation Serif" font-size="11" font-style="italic" font-weight="bold" fill="#fff" text-anchor="middle">1</text></svg>
<svg class="ic" style="left:1199px;top:997px;" width="15" height="15" viewBox="0 0 15 15"><rect x="0.5" y="0.5" width="10" height="8" fill="#c8e0f8" stroke="#3a78d8"/><rect x="4.5" y="5.5" width="10" height="8" fill="#2a68e8" stroke="#fff"/><circle cx="11" cy="12" r="3" fill="#30a040"/></svg>
<svg class="ic" style="left:1216px;top:997px;" width="16" height="14" viewBox="0 0 16 14"><path d="M1 5 H4 L8 1 V13 L4 9 H1Z" fill="#eee" stroke="#aaa" stroke-width="0.6"/><path d="M10 4 Q12 7 10 10 M12 2 Q15 7 12 12" fill="none" stroke="#5ac83a" stroke-width="1.3"/></svg>
<div class="t" style="left:1238px;top:998px;color:#fff;font-size:12px"><span class="d">17</span>:<span class="d">53</span></div>
</body></html>
